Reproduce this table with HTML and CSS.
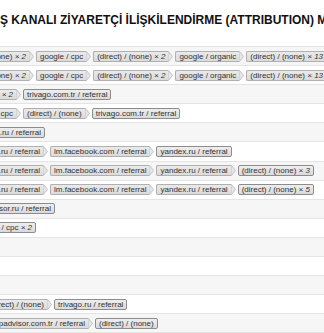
FILE: index.html
```html
<!DOCTYPE html>
<html lang="tr">
<head>
<meta charset="utf-8">
<title>Attribution</title>
<link rel="stylesheet" href="styles.css">
</head>
<body>
<div class="page">
  <h1 class="title">Ş KANALI ZİYARETÇİ İLİŞKİLENDİRME (ATTRIBUTION) MODELİ</h1>
  <div class="paths">
    <div class="row odd">
      <span class="lead cut-34"><span class="step"><span class="label">(direct) / (none) <i>× 2</i></span><svg class="tip" viewBox="0 0 5 11"><polygon points="0,0.5 0.5,0.5 4.5,5.5 0.5,10.5 0,10.5"/></svg></span></span>
      <span class="step"><span class="label">google / cpc</span><svg class="tip" viewBox="0 0 5 11"><polygon points="0,0.5 0.5,0.5 4.5,5.5 0.5,10.5 0,10.5"/></svg></span>
      <span class="step"><span class="label">(direct) / (none) <i>× 2</i></span><svg class="tip" viewBox="0 0 5 11"><polygon points="0,0.5 0.5,0.5 4.5,5.5 0.5,10.5 0,10.5"/></svg></span>
      <span class="step"><span class="label">google / organic</span><svg class="tip" viewBox="0 0 5 11"><polygon points="0,0.5 0.5,0.5 4.5,5.5 0.5,10.5 0,10.5"/></svg></span>
      <span class="step"><span class="label">(direct) / (none) <i>× 13</i></span><svg class="tip" viewBox="0 0 5 11"><polygon points="0,0.5 0.5,0.5 4.5,5.5 0.5,10.5 0,10.5"/></svg></span>
    </div>
    <div class="row">
      <span class="lead cut-34"><span class="step"><span class="label">(direct) / (none) <i>× 2</i></span><svg class="tip" viewBox="0 0 5 11"><polygon points="0,0.5 0.5,0.5 4.5,5.5 0.5,10.5 0,10.5"/></svg></span></span>
      <span class="step"><span class="label">google / cpc</span><svg class="tip" viewBox="0 0 5 11"><polygon points="0,0.5 0.5,0.5 4.5,5.5 0.5,10.5 0,10.5"/></svg></span>
      <span class="step"><span class="label">(direct) / (none) <i>× 2</i></span><svg class="tip" viewBox="0 0 5 11"><polygon points="0,0.5 0.5,0.5 4.5,5.5 0.5,10.5 0,10.5"/></svg></span>
      <span class="step"><span class="label">google / organic</span><svg class="tip" viewBox="0 0 5 11"><polygon points="0,0.5 0.5,0.5 4.5,5.5 0.5,10.5 0,10.5"/></svg></span>
      <span class="step"><span class="label">(direct) / (none) <i>× 13</i></span><svg class="tip" viewBox="0 0 5 11"><polygon points="0,0.5 0.5,0.5 4.5,5.5 0.5,10.5 0,10.5"/></svg></span>
    </div>
    <div class="row odd">
      <span class="lead cut-21"><span class="step"><span class="label">(direct) / (none) <i>× 2</i></span><svg class="tip" viewBox="0 0 5 11"><polygon points="0,0.5 0.5,0.5 4.5,5.5 0.5,10.5 0,10.5"/></svg></span></span>
      <span class="step end"><span class="label">trivago.com.tr / referral</span></span>
    </div>
    <div class="row">
      <span class="lead cut-21"><span class="step"><span class="label">google / cpc</span><svg class="tip" viewBox="0 0 5 11"><polygon points="0,0.5 0.5,0.5 4.5,5.5 0.5,10.5 0,10.5"/></svg></span></span>
      <span class="step"><span class="label">(direct) / (none)</span><svg class="tip" viewBox="0 0 5 11"><polygon points="0,0.5 0.5,0.5 4.5,5.5 0.5,10.5 0,10.5"/></svg></span>
      <span class="step end"><span class="label">trivago.com.tr / referral</span></span>
    </div>
    <div class="row odd">
      <span class="lead cut-45"><span class="step end"><span class="label">yandex.ru / referral</span></span></span>
    </div>
    <div class="row">
      <span class="lead cut-48"><span class="step"><span class="label">yandex.ru / referral</span><svg class="tip" viewBox="0 0 5 11"><polygon points="0,0.5 0.5,0.5 4.5,5.5 0.5,10.5 0,10.5"/></svg></span></span>
      <span class="step"><span class="label">lm.facebook.com / referral</span><svg class="tip" viewBox="0 0 5 11"><polygon points="0,0.5 0.5,0.5 4.5,5.5 0.5,10.5 0,10.5"/></svg></span>
      <span class="step end"><span class="label">yandex.ru / referral</span></span>
    </div>
    <div class="row odd">
      <span class="lead cut-48"><span class="step"><span class="label">yandex.ru / referral</span><svg class="tip" viewBox="0 0 5 11"><polygon points="0,0.5 0.5,0.5 4.5,5.5 0.5,10.5 0,10.5"/></svg></span></span>
      <span class="step"><span class="label">lm.facebook.com / referral</span><svg class="tip" viewBox="0 0 5 11"><polygon points="0,0.5 0.5,0.5 4.5,5.5 0.5,10.5 0,10.5"/></svg></span>
      <span class="step"><span class="label">yandex.ru / referral</span><svg class="tip" viewBox="0 0 5 11"><polygon points="0,0.5 0.5,0.5 4.5,5.5 0.5,10.5 0,10.5"/></svg></span>
      <span class="step end"><span class="label">(direct) / (none) <i>× 3</i></span></span>
    </div>
    <div class="row">
      <span class="lead cut-48"><span class="step"><span class="label">yandex.ru / referral</span><svg class="tip" viewBox="0 0 5 11"><polygon points="0,0.5 0.5,0.5 4.5,5.5 0.5,10.5 0,10.5"/></svg></span></span>
      <span class="step"><span class="label">lm.facebook.com / referral</span><svg class="tip" viewBox="0 0 5 11"><polygon points="0,0.5 0.5,0.5 4.5,5.5 0.5,10.5 0,10.5"/></svg></span>
      <span class="step"><span class="label">yandex.ru / referral</span><svg class="tip" viewBox="0 0 5 11"><polygon points="0,0.5 0.5,0.5 4.5,5.5 0.5,10.5 0,10.5"/></svg></span>
      <span class="step end"><span class="label">(direct) / (none) <i>× 5</i></span></span>
    </div>
    <div class="row odd">
      <span class="lead cut-55"><span class="step end"><span class="label">tripadvisor.ru / referral</span></span></span>
    </div>
    <div class="row">
      <span class="lead cut-36"><span class="step end"><span class="label">google / cpc <i>× 2</i></span></span></span>
    </div>
    <div class="row odd"></div>
    <div class="row"></div>
    <div class="row odd"></div>
    <div class="row">
      <span class="lead cut-52"><span class="step"><span class="label">(direct) / (none)</span><svg class="tip" viewBox="0 0 5 11"><polygon points="0,0.5 0.5,0.5 4.5,5.5 0.5,10.5 0,10.5"/></svg></span></span>
      <span class="step end"><span class="label">trivago.ru / referral</span></span>
    </div>
    <div class="row odd">
      <span class="lead cut-93"><span class="step"><span class="label">tripadvisor.com.tr / referral</span><svg class="tip" viewBox="0 0 5 11"><polygon points="0,0.5 0.5,0.5 4.5,5.5 0.5,10.5 0,10.5"/></svg></span></span>
      <span class="step end"><span class="label">(direct) / (none)</span></span>
    </div>
  </div>
</div>
</body>
</html>
```

FILE: styles.css
```css
html, body {
  margin: 0;
  padding: 0;
  background: #ffffff;
  overflow: hidden;
}

.page {
  width: 324px;
  overflow: hidden;
  font-family: "Liberation Sans", Arial, sans-serif;
}

.title {
  margin: 13px 0 0 0;
  height: 33px;
  font-size: 12px;
  line-height: 14px;
  font-weight: bold;
  color: #111111;
  white-space: nowrap;
  overflow: hidden;
}

.paths {
  border-top: 1px solid #e2e2e2;
}

.row {
  display: flex;
  align-items: center;
  gap: 2px;
  height: 18.1px;
  border-bottom: 1px solid #e4e4e4;
  background: #ffffff;
  overflow: hidden;
  white-space: nowrap;
}

.row.odd {
  background: #f6f6f6;
}

.lead {
  display: flex;
  justify-content: flex-end;
  overflow: hidden;
  flex: none;
}

.cut-21 { width: 21px; }
.cut-34 { width: 34px; }
.cut-36 { width: 36px; }
.cut-45 { width: 45px; }
.cut-48 { width: 48px; }
.cut-52 { width: 52px; }
.cut-55 { width: 55px; }
.cut-93 { width: 93px; }

.step {
  display: flex;
  align-items: stretch;
  flex: none;
  height: 11px;
}

.label {
  display: block;
  font-size: 8px;
  line-height: 9px;
  color: #333333;
  padding: 0 3px;
  background: linear-gradient(#eaeaea, #dbdbdb);
  border: 1px solid #b0b0b0;
  border-right: none;
  border-radius: 2px 0 0 2px;
}

.label i {
  font-style: italic;
}

.tip {
  display: block;
  width: 5px;
  height: 11px;
  flex: none;
}

.tip polygon {
  fill: #e6e6e6;
  stroke: #c2c2c2;
  stroke-width: 1;
}

.step.end .label {
  padding: 0 3px;
  border: 1px solid #8c8c8c;
  border-radius: 2px;
  background: linear-gradient(#eeeeee, #dadada);
}
```
